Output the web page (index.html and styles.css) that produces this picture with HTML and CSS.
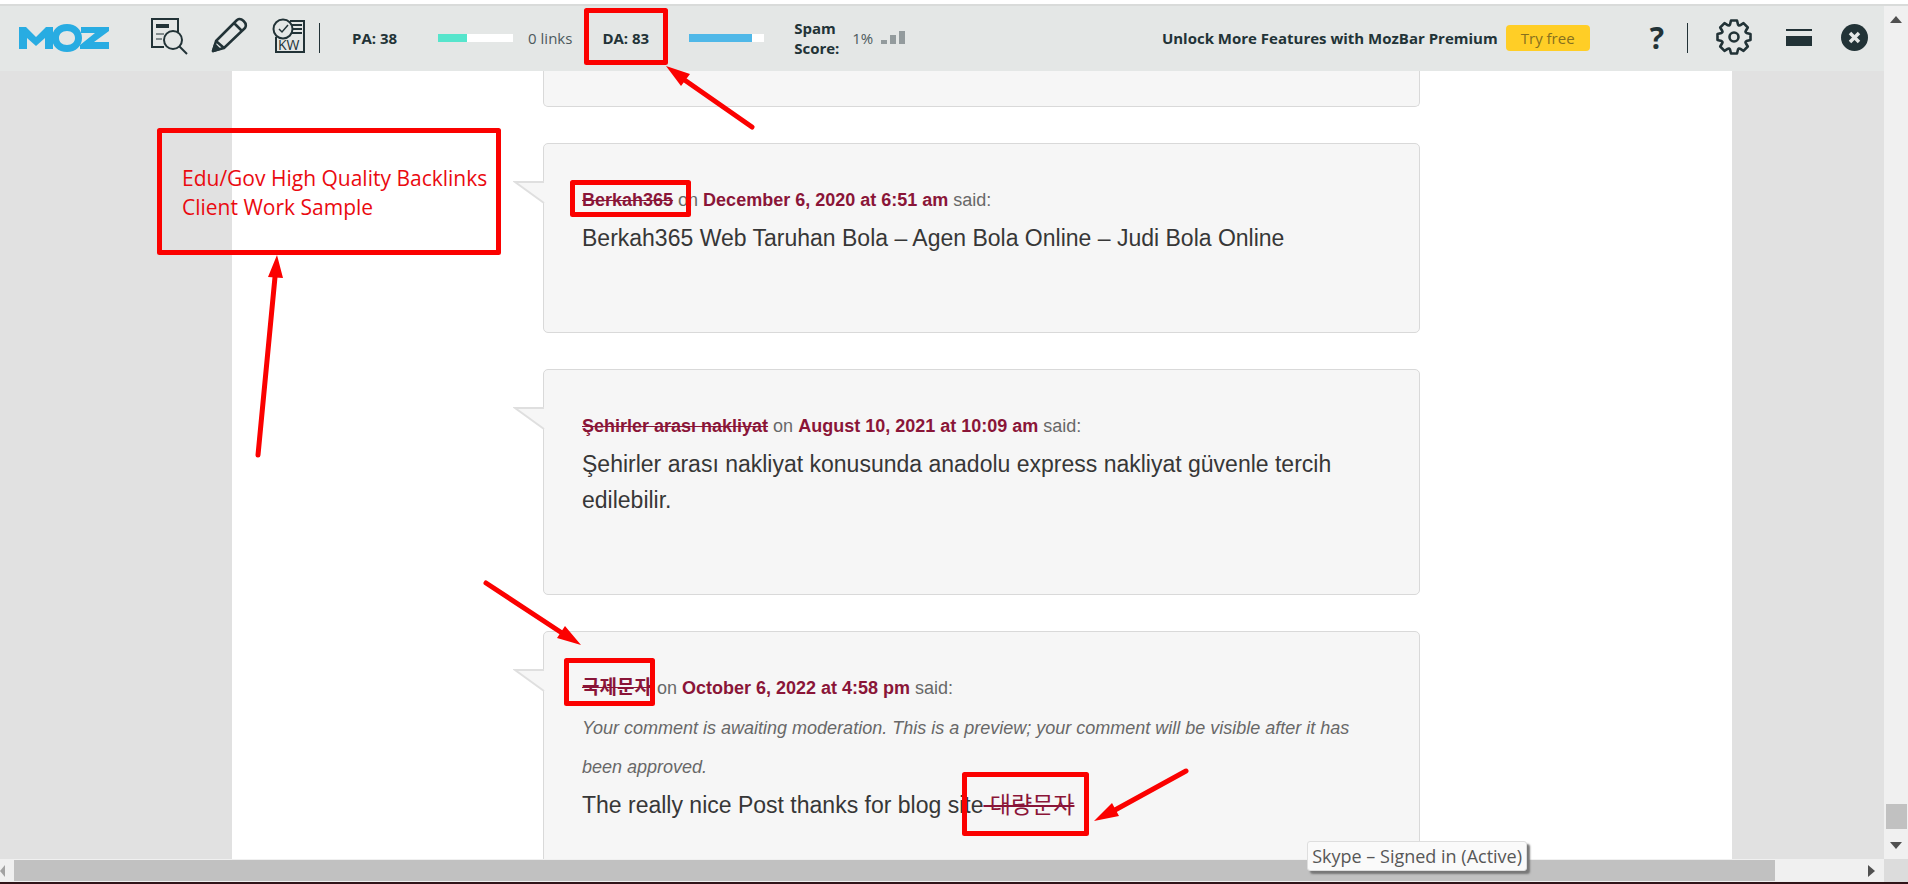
FILE: index.html
```html
<!DOCTYPE html>
<html lang="en">
<head>
<meta charset="utf-8">
<title>Comments</title>
<link rel="stylesheet" href="styles.css">
</head>
<body>
<div class="window">
  <header class="mozbar">
    <a class="logo" href="#" aria-label="Moz">
      <svg width="90" height="28" viewBox="0 0 90 28" fill="#28ace2"><path d="M0 3h7l10 10L27 3h7v22h-8V14l-9 8-9-8v11H0z"/><path fill-rule="evenodd" d="M48 0c9 0 15 6 15 14s-6 14-15 14-15-6-15-14S39 0 48 0zm0 7c-5 0-8 3-8 7s3 7 8 7 8-3 8-7-3-7-8-7z"/><path d="M62 3h28v4L75 18h15v7H61v-4l15-12H62z"/></svg>
    </a>
    <div class="tools">
      <button class="tool" aria-label="Page analysis">
        <svg width="38" height="38" viewBox="0 0 38 38" fill="none" stroke="#223337" stroke-width="2"><path d="M14 30H2V2h26v13"/><path d="M6 7h13v4H6z" fill="#223337" stroke="none"/><path d="M6 17h8M6 22h6" stroke-width="1"/><circle cx="23" cy="23" r="9"/><path d="M29 29l8 8"/></svg>
      </button>
      <button class="tool" aria-label="Highlight links">
        <svg width="38" height="38" viewBox="0 0 38 38" fill="none" stroke="#223337" stroke-width="2.500" stroke-linejoin="round"><path d="M2 34l3-10L26 3c4-3 11 3 8 8L13 31zM23 6l8 8M5 24l8 7"/><path d="M2 34l2-6 4 4z" fill="#223337"/></svg>
      </button>
      <button class="tool" aria-label="Keyword research">
        <svg width="34" height="38" viewBox="0 0 34 38" fill="none" stroke="#223337" stroke-width="2"><path d="M4 20v15h28V4H18"/><circle cx="11" cy="12" r="9.500"/><path d="M7 12l3 3 6-7" stroke-width="1.500"/><path d="M20 8h10M21 12h9M20 16h10"/><text x="6" y="33" class="kw">KW</text></svg>
      </button>
    </div>
    <span class="rule"></span>
    <strong class="metric pa">PA: 38</strong>
    <span class="meter"><span class="fill teal" style="width:39%"></span></span>
    <span class="links">0 links</span>
    <strong class="metric da">DA: 83</strong>
    <span class="meter"><span class="fill blue" style="width:84%"></span></span>
    <strong class="spam">Spam Score:</strong>
    <span class="percent">1%</span>
    <svg class="bars" width="24" height="13" fill="#939b9d"><path d="M0 9h6v4H0zM9 4h6v9H9zM18 0h6v13h-6z"/></svg>
    <strong class="unlock">Unlock More Features with MozBar Premium</strong>
    <button class="try">Try free</button>
    <button class="help" aria-label="Help">?</button>
    <span class="rule"></span>
    <button class="gear" aria-label="Settings">
      <svg width="36" height="36" viewBox="-18 -18 36 36" fill="none" stroke="#223337" stroke-width="2.600" stroke-linejoin="round"><path d="M-3-16.500H3L4-12.500Q5-11 6-11.700L9.500-13.800 13.800-9.500 11.700-6Q11-5 12.500-4L16.500-3V3L12.500 4Q11 5 11.700 6L13.800 9.500 9.500 13.800 6 11.700Q5 11 4 12.500L3 16.500H-3L-4 12.500Q-5 11-6 11.700L-9.500 13.800-13.800 9.500-11.700 6Q-11 5-12.500 4L-16.500 3V-3L-12.500-4Q-11-5-11.700-6L-13.800-9.500-9.500-13.800-6-11.700Q-5-11-4-12.500z"/><circle r="4.500"/></svg>
    </button>
    <button class="dock" aria-label="Dock toolbar">
      <svg width="26" height="17" fill="#223337"><path d="M0 0h26v2H0zM0 7h26v10H0z"/></svg>
    </button>
    <button class="close" aria-label="Close">
      <svg width="27" height="27"><circle cx="13.500" cy="13.500" r="13.500" fill="#223337"/><path d="M9 9l9 9M18 9l-9 9" stroke="#e4e7e6" stroke-width="3.500"/></svg>
    </button>
  </header>
  <main class="viewport">
    <div class="page">
      <ol class="comments">
        <li class="comment previous"></li>
        <li class="comment">
          <svg class="tail" width="32" height="24"><path d="M31 1H2l29 21" fill="#f6f6f6" stroke="#dfdfdf" stroke-width="2"/></svg>
          <p class="meta"><a class="author" href="#">Berkah365</a> on <a href="#">December 6, 2020 at 6:51 am</a> said:</p>
          <p class="text">Berkah365 Web Taruhan Bola – Agen Bola Online – Judi Bola Online</p>
        </li>
        <li class="comment">
          <svg class="tail" width="32" height="24"><path d="M31 1H2l29 21" fill="#f6f6f6" stroke="#dfdfdf" stroke-width="2"/></svg>
          <p class="meta"><a class="author" href="#">Şehirler arası nakliyat</a> on <a href="#">August 10, 2021 at 10:09 am</a> said:</p>
          <p class="text">Şehirler arası nakliyat konusunda anadolu express nakliyat güvenle tercih edilebilir.</p>
        </li>
        <li class="comment">
          <svg class="tail" width="32" height="24"><path d="M31 1H2l29 21" fill="#f6f6f6" stroke="#dfdfdf" stroke-width="2"/></svg>
          <p class="meta"><a class="author korean" href="#">국제문자</a> on <a href="#">October 6, 2022 at 4:58 pm</a> said:</p>
          <p class="notice">Your comment is awaiting moderation. This is a preview; your comment will be visible after it has been approved.</p>
          <p class="text">The really nice Post thanks for blog site<a class="spamlink" href="#"> 대량문자</a></p>
        </li>
      </ol>
    </div>
  </main>
  <div class="vscroll">
    <svg width="12" height="7" fill="#505050"><path d="M6 0l6 7H0z"/></svg>
    <span class="vthumb"></span>
    <svg width="12" height="7" fill="#505050"><path d="M0 0h12L6 7z"/></svg>
  </div>
  <div class="hscroll">
    <svg width="6" height="12" fill="#a3a3a3"><path d="M5 0v12L0 6z"/></svg>
    <span class="hthumb"></span>
    <svg width="7" height="12" fill="#505050"><path d="M0 0v12l7-6z"/></svg>
  </div>
  <div class="corner"></div>
  <div class="tooltip" role="tooltip">Skype – Signed in (Active)</div>
  <div class="note">Edu/Gov High Quality Backlinks Client Work Sample</div>
  <svg class="marks" viewBox="0 0 1908 884" fill="none" stroke="#fb0100" stroke-width="5" stroke-linejoin="round" stroke-linecap="round">
    <path d="M586.500 10.500h79v52h-79zM159.500 130.500h339v122h-339zM572.500 182.500h116v32h-116zM566.500 660.500h86v43h-86zM964.500 774.500h122v59h-122z"/>
    <path d="M752 127l-66-46M258 455l17-178M486 583l76 50M1186 771l-71 39"/>
    <path d="M666 66l24 8-9 12zM277 255l6 23-15-1zM581 645l-24-7 8-12zM1094 821l18-18 7 13z" fill="#fb0100" stroke="none"/>
  </svg>
</div>
</body>
</html>
```
FILE: styles.css
```css
* { box-sizing: border-box; }
body { margin: 0; font-family: "Liberation Sans", Arial, "Noto Sans CJK KR", sans-serif; }
button { border: 0; padding: 0; background: none; font: inherit; color: inherit; }
svg { display: block; }
p { margin: 0; }
.window {
  position: relative;
  display: grid;
  grid-template: auto minmax(0, 1fr) 23px / minmax(0, 1fr) 24px;
  height: 100vh;
  overflow: hidden;
  border-top: 4px solid #fff;
  border-bottom: 2px solid #301418;
}
.mozbar {
  display: flex;
  align-items: center;
  height: 67px;
  padding: 0 16px 2px 19px;
  border-top: 2px solid #d9dbda;
  background: #e4e7e6;
  color: #223337;
  font: 15px/20px "Open Sans", "Noto Sans", sans-serif;
}
.tools { display: flex; align-items: center; gap: 23px; margin: 0 13px 4px 41px; }
.kw { font: 14px "Open Sans", sans-serif; fill: #223337; stroke: none; }
.rule { width: 1px; height: 30px; background: #223337; }
.pa { margin: 0 41px 0 32px; }
.da { margin: 0 40px 0 30px; }
.meter { display: flex; width: 75px; height: 8px; background: #fff; }
.fill { height: 8px; }
.teal { background: #56e5cc; }
.blue { background: #4fb8e8; }
.links { margin-left: 15px; color: #4d5a5d; }
.spam { width: 46px; margin: 0 12px 0 30px; }
.percent { margin-right: 8px; color: #4d5a5d; }
.unlock { margin: 0 8px 0 auto; }
.try { width: 84px; height: 26px; border-radius: 4px; background: #ffce26; color: #86701f; }
.help { margin: 0 23px 0 60px; font-size: 30px; font-weight: 700; }
.gear { margin: 0 0 2px 28px; }
.dock { margin: 0 29px 0 34px; }
.viewport { display: flex; padding: 0 152px 0 232px; overflow: hidden; background: #e1e1e1; }
.page { flex: 1; padding: 0 312px 0 311px; background: #fff; }
.comments { display: grid; gap: 36px; margin: 0; padding: 0; list-style: none; }
.comment {
  position: relative;
  padding: 42px 38px 76px;
  border: 1px solid #d9d9d9;
  border-radius: 5px;
  background: #f6f6f6;
}
.previous { height: 36px; padding: 0; border-top: 0; border-radius: 0 0 5px 5px; }
.tail { position: absolute; top: 37px; left: -31px; }
.meta { color: #686868; font-size: 18px; line-height: 28px; padding-bottom: 6px; }
.meta a { color: #8a1538; font-weight: 700; text-decoration: none; }
.meta .author { text-decoration: line-through; }
.meta .korean { font-size: 19px; }
.notice { padding-top: 1px; color: #686868; font-size: 18px; font-style: italic; line-height: 39px; }
.text { color: #373737; font-size: 23px; line-height: 36px; }
.spamlink { color: #8a1538; text-decoration: line-through; }
.vscroll {
  grid-column: 2;
  grid-row: 1 / 3;
  display: flex;
  flex-direction: column;
  align-items: center;
  padding: 10px 0 10px;
  border-top: 2px solid #d9dbda;
  background: #f0f0f0;
}
.vthumb { width: 21px; height: 25px; margin: auto 0 13px; background: #c1c1c1; }
.hscroll { display: flex; align-items: center; padding-right: 9px; background: #f0f0f0; }
.hthumb { flex: 0 1 1761px; height: 21px; margin: 0 auto 0 8px; background: #c1c1c1; }
.corner { background: #dcdcdc; }
.tooltip {
  position: absolute;
  right: 381px;
  bottom: 11px;
  padding: 0 4px;
  border: 1px solid #dedede;
  border-radius: 3px;
  background: #fafafa;
  box-shadow: 3px 3px 2px #777;
  color: #575757;
  font: 18px/28px "Open Sans", "Noto Sans", sans-serif;
}
.note {
  position: absolute;
  top: 160px;
  left: 182px;
  width: 320px;
  color: #ea0a10;
  font: 21px/29px "Open Sans", sans-serif;
}
.marks { position: absolute; top: -4px; left: 0; width: 1908px; height: 884px; pointer-events: none; }
```
